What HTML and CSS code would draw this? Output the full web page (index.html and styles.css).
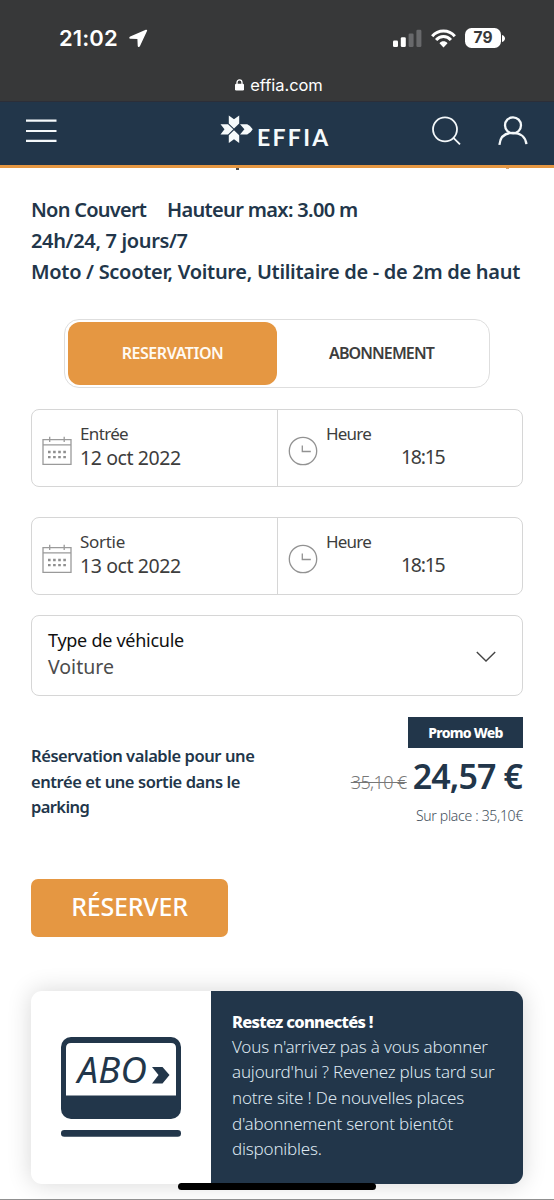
FILE: index.html
```html
<!DOCTYPE html>
<html lang="fr">
<head>
<meta charset="utf-8">
<title>EFFIA</title>
<link rel="stylesheet" href="styles.css">
</head>
<body>
<div class="screen">
  <div class="browser">
    <div class="status">
      <div class="status-left">
        <span class="time">21:02</span>
        <svg class="location" width="19" height="19" viewBox="0 0 19 19"><path d="M16.8 .8 1.2 7.5C-.2 8.2.1 9.8 1.6 9.8L8.4 9.9 8.7 16.8C8.8 18.3 10.4 18.6 11 17.1L18 2.1C18.5 1 17.8.4 16.8.8Z" fill="#fff"/></svg>
      </div>
      <div class="status-right">
        <svg width="29" height="19" viewBox="0 0 29 19"><rect x="0" y="11.5" width="5" height="6.5" rx="1.3" fill="#fff"/><rect x="7.8" y="8.3" width="5" height="9.7" rx="1.3" fill="#fff"/><rect x="15.6" y="4.5" width="5" height="13.5" rx="1.3" fill="#68696b"/><rect x="23.4" y=".7" width="5" height="17.3" rx="1.3" fill="#68696b"/></svg>
        <svg class="wifi" width="25" height="19" viewBox="0 0 25 19"><g fill="none" stroke="#fff" stroke-width="3"><path d="M1.2 7.2C7.2.4 17.8.4 23.8 7.2"/><path d="M5.1 11.1C9.2 6.4 15.8 6.4 19.9 11.1"/></g><path d="M8.5 14.2C10.6 11.7 14.4 11.7 16.5 14.2L12.5 18.4Z" fill="#fff"/></svg>
        <span class="battery">79</span><svg width="3" height="7" viewBox="0 0 3 7"><path d="M0 0C4 1.2 4 5.8 0 7Z" fill="#fff"/></svg>
      </div>
    </div>
    <div class="address">
      <svg width="9" height="12" viewBox="0 0 9 12"><rect y="4.8" width="9" height="6.7" rx="1.2" fill="#fff"/><path d="M2 5.5V3.5a2.5 2.7 0 0 1 5 0v2" fill="none" stroke="#fff" stroke-width="1.3"/></svg>
      <span>effia.com</span>
    </div>
  </div>
  <header class="header">
    <svg class="menu" width="31" height="24" viewBox="0 0 31 24"><path d="M0 1.7H30.5M0 12H30.5M0 21.8H30.5" stroke="#f4f8fa" stroke-width="2.2"/></svg>
    <div class="logo">
      <svg width="33" height="29" viewBox="0 0 33 29"><g fill="#f6fafb"><path d="M8.8.5 14 4.2 19.2.5V8.5L14 13.4 8.8 8.5Z"/><path d="M8.8 28 14 24.3 19.2 28V20.2L14 15.3 8.8 20.2Z"/><path d="M.5 9.2H8L13.3 14.3 8 19.4H.5L4.5 14.3Z"/><path d="M20 9.2H27.2Q31 10.8 32.7 14.3 31 17.7 27.2 19.4H20L24.4 14.3Z"/></g></svg>
      <span>EFFIA</span>
    </div>
    <svg class="search" width="29" height="30" viewBox="0 0 29 30"><g fill="none" stroke="#f4f8fa" stroke-width="1.8"><circle cx="13" cy="13.3" r="12"/><path d="M21.4 21.8 28 28.4"/></g></svg>
    <svg class="user" width="30" height="30" viewBox="0 0 30 30"><g fill="none" stroke="#f4f8fa" stroke-width="2.3"><circle cx="15" cy="9.3" r="8"/><path d="M1.4 28.8C2.1 21.5 6.5 16.8 14.8 16.8S27.7 21.5 28.4 28.2"/></g></svg>
  </header>
  <main class="page">
    <div class="clipped"><i class="speck"></i><i class="speck speck-orange"></i></div>
    <section class="details">
      <div class="line"><span class="covered">Non Couvert</span><span class="max-height">Hauteur max: 3.00 m</span></div>
      <div class="line hours">24h/24, 7 jours/7</div>
      <div class="line vehicles">Moto / Scooter, Voiture, Utilitaire de - de 2m de haut</div>
    </section>
    <nav class="tabs"><div class="tab tab-active">RESERVATION</div><div class="tab tab-idle">ABONNEMENT</div></nav>
    <section class="field">
      <div class="date">
        <svg width="30" height="30" viewBox="0 0 30 30"><g fill="none" stroke="#9a9a9a" stroke-width="1.3"><path d="M1 3.7H29V28.3H1ZM1 8.8H29M7.7.7V6M22.2.7V6"/></g><path d="M6 16H24M6 21.2H24" stroke="#8e8e8e" stroke-width="2.3" stroke-dasharray="2.6 2.5"/></svg>
        <div><div class="label entry">Entrée</div><div class="value">12 oct 2022</div></div>
      </div>
      <div class="hour">
        <svg width="30" height="30" viewBox="0 0 30 30"><g fill="none" stroke="#929292" stroke-width="1.3"><circle cx="15" cy="15" r="13.7"/><path d="M14.3 9.4V15.5H22.8"/></g></svg>
        <div class="hour-text"><div class="label clock-label">Heure</div><div class="value clock">18:15</div></div>
      </div>
    </section>
    <section class="field field-exit">
      <div class="date">
        <svg width="30" height="30" viewBox="0 0 30 30"><g fill="none" stroke="#9a9a9a" stroke-width="1.3"><path d="M1 3.7H29V28.3H1ZM1 8.8H29M7.7.7V6M22.2.7V6"/></g><path d="M6 16H24M6 21.2H24" stroke="#8e8e8e" stroke-width="2.3" stroke-dasharray="2.6 2.5"/></svg>
        <div><div class="label">Sortie</div><div class="value">13 oct 2022</div></div>
      </div>
      <div class="hour">
        <svg width="30" height="30" viewBox="0 0 30 30"><g fill="none" stroke="#929292" stroke-width="1.3"><circle cx="15" cy="15" r="13.7"/><path d="M14.3 9.4V15.5H22.8"/></g></svg>
        <div class="hour-text"><div class="label clock-label">Heure</div><div class="value clock">18:15</div></div>
      </div>
    </section>
    <section class="select">
      <div><div class="select-label">Type de véhicule</div><div class="select-value">Voiture</div></div>
      <svg width="20" height="12" viewBox="0 0 20 12"><path d="M.8 1 10 10 19.2 1" fill="none" stroke="#444" stroke-width="1.4"/></svg>
    </section>
    <section class="offer">
      <div class="terms"><div>Réservation valable pour une</div><div>entrée et une sortie dans le</div><div class="last-term">parking</div></div>
      <div class="pricing">
        <div class="promo">Promo Web</div>
        <div class="prices"><span class="old">35,10 €</span><span class="price">24,57 €</span></div>
        <div class="onsite">Sur place : 35,10€</div>
      </div>
    </section>
    <div class="book">RÉSERVER</div>
    <section class="card">
      <div class="card-picture">
        <svg width="120" height="101" viewBox="0 0 120 101"><rect width="120" height="82" rx="10" fill="#22364a"/><path d="M5 58.5V11Q5 6 10 6H110Q115 6 115 11V58.5Z" fill="#fff"/><text x="16.5" y="45.5" class="abo">ABO</text><path d="M91 30H101.5L108.5 38 101.5 46.5H91L97.5 38Z" fill="#22364a"/><rect y="93" width="120" height="6.7" rx="3.3" fill="#22364a"/></svg>
      </div>
      <div class="card-text"><div class="card-title">Restez connectés !</div><div>Vous n'arrivez pas à vous abonner</div><div>aujourd'hui ? Revenez plus tard sur</div><div>notre site ! De nouvelles places</div><div>d'abonnement seront bientôt</div><div>disponibles.</div></div>
    </section>
  </main>
  <div class="home-bar"></div>
</div>
</body>
</html>
```
FILE: styles.css
```css
* { box-sizing: border-box; }
body { margin: 0; background: #fff; font-family: "Noto Sans", sans-serif; color: #3d3d3d; }
svg { display: block; flex: none; }
.screen { position: relative; width: 554px; height: 1200px; overflow: hidden; white-space: nowrap; border-bottom: 1px solid #909090; }
.browser { height: 102px; background: #373839; color: #fff; font-family: Inter, sans-serif; border-bottom: 1px solid #2c2e38; }
.status { display: flex; justify-content: space-between; height: 72px; padding: 27px 49px 0 59px; }
.status-left, .status-right { display: flex; align-items: center; height: 22px; }
.time { font-size: 22px; font-weight: 600; letter-spacing: .1px; }
.location { margin-left: 11px; }
.wifi { margin-left: 9px; }
.battery { width: 36px; height: 20px; margin: 0 1px 0 9px; border-radius: 6.5px; background: #fff; color: #373839; font-size: 15.5px; font-weight: 700; line-height: 20px; text-align: center; }
.address { display: flex; justify-content: center; align-items: center; gap: 6px; height: 25px; font-size: 16.5px; padding-left: 4px; letter-spacing: -.05px; }
.header { display: flex; height: 66px; padding: 14px 26px 0; background: #22364a; border-bottom: 3px solid #e59742; }
.menu { margin: 3px 0 0; }
.logo { display: flex; margin: -1px 0 0 163px; width: 110px; }
.logo span { margin: 8px 0 0 4px; font: 700 23px/28px Lato, sans-serif; letter-spacing: 2.3px; color: #f6fafb; }
.search { margin-left: 102px; }
.user { margin-left: 37px; }
.page { padding: 0 31px; }
.clipped { display: flex; height: 26px; margin: 0 -31px; padding: 0 45px 0 236px; justify-content: space-between; }
.speck { width: 3px; height: 2px; background: #4b4a4a; }
.speck-orange { height: 1px; background: #d8a878; }
.details { font-size: 20px; font-weight: 600; color: #22364a; }
.line { display: flex; height: 31px; line-height: 31px; letter-spacing: -.66px; }
.covered { width: 136px; letter-spacing: -.75px; }
.hours { letter-spacing: -.35px; }
.vehicles { letter-spacing: -.3px; }
.tabs { display: flex; width: 426px; height: 69px; margin: 32px 0 0 33px; padding: 2px 3px; border: 1.5px solid #dedede; border-radius: 15px; font-size: 16px; font-weight: 600; line-height: 63px; text-align: center; }
.tab { width: 209px; border-radius: 12px; letter-spacing: -.45px; }
.tab-active { background: #e59742; color: #fffaf2; }
.tab-idle { letter-spacing: -.9px; }
.field { display: flex; height: 78px; margin-top: 21px; border: 1.5px solid #d6d6d6; border-radius: 8px; }
.field-exit { margin-top: 30px; }
.date { display: flex; width: 246px; padding: 12px 0 0 10px; gap: 8px; border-right: 1.5px solid #d6d6d6; }
.hour { display: flex; padding: 12px 0 0 10px; gap: 8px; }
.date svg, .hour svg { margin-top: 14px; }
.label { height: 24px; font-size: 17px; line-height: 24px; letter-spacing: -.3px; }
.entry { letter-spacing: -.65px; }
.clock-label { letter-spacing: -.8px; }
.value { height: 24px; font-size: 19.5px; line-height: 24px; letter-spacing: -.4px; }
.clock { margin: -1px 0 0 75px; letter-spacing: -1.3px; }
.select { display: flex; justify-content: space-between; height: 81px; margin-top: 20px; padding: 11px 26px 0 16px; border: 1.5px solid #d6d6d6; border-radius: 8px; }
.select svg { margin-top: 24px; }
.select-label { height: 27px; font-size: 18px; line-height: 27px; letter-spacing: -.27px; color: #111; }
.select-value { font-size: 19.5px; line-height: 26px; color: #4c4c4c; }
.offer { display: flex; justify-content: space-between; height: 182.5px; padding-top: 21px; color: #22364a; }
.terms { margin-top: 26px; font-size: 16.5px; font-weight: 600; line-height: 25.7px; letter-spacing: -.43px; }
.last-term { letter-spacing: -.6px; }
.pricing { display: flex; flex-direction: column; align-items: flex-end; }
.promo { width: 115px; height: 31px; background: #22364a; color: #fff; font-size: 14px; font-weight: 800; line-height: 32px; letter-spacing: -.75px; text-align: center; }
.prices { display: flex; align-items: baseline; gap: 6px; height: 56px; margin-right: 1px; line-height: 56px; }
.old { font-size: 18px; font-weight: 300; letter-spacing: -.6px; color: #777; text-decoration: line-through; }
.price { font-size: 34px; font-weight: 600; letter-spacing: -.9px; }
.onsite { font-size: 14px; font-weight: 300; line-height: 24px; letter-spacing: -.3px; color: #44505c; }
.book { width: 197px; height: 58px; border-radius: 7px; background: #e59742; color: #fff; font-size: 25px; font-weight: 500; line-height: 55px; letter-spacing: -.2px; text-align: center; }
.card { display: flex; height: 193px; margin-top: 54px; border-radius: 11px; background: #fff; box-shadow: 0 0 24px rgba(0,0,0,.16); }
.card-picture { width: 180px; padding: 46.5px 0 0 30px; }
.abo { font: italic 400 36.5px "Noto Sans", sans-serif; letter-spacing: .3px; fill: #22364a; }
.card-text { flex: 1; padding: 18.5px 0 0 21px; border-radius: 0 11px 11px 0; background: #22364a; color: #dde7f0; font-size: 17px; font-weight: 300; line-height: 25.7px; letter-spacing: -.19px; }
.card-title { height: 24.5px; font-size: 16.5px; font-weight: 800; letter-spacing: -.7px; color: #fff; }
.home-bar { position: absolute; left: 178px; top: 1183px; width: 198px; height: 7px; border-radius: 4px; background: #000; }
```
